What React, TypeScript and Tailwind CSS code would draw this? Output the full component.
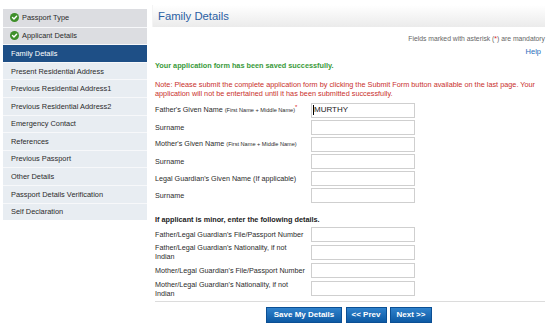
import React from "react";

const sideItems = [
  { label: "Passport Type", done: true },
  { label: "Applicant Details", done: true },
  { label: "Family Details", active: true },
  { label: "Present Residential Address" },
  { label: "Previous Residential Address1" },
  { label: "Previous Residential Address2" },
  { label: "Emergency Contact" },
  { label: "References" },
  { label: "Previous Passport" },
  { label: "Other Details" },
  { label: "Passport Details Verification" },
  { label: "Self Declaration" },
];

const CheckIcon = () => (
  <svg width="9" height="9" viewBox="0 0 10 10" className="shrink-0">
    <circle cx="5" cy="5" r="5" fill="#3f8f2a" />
    <path d="M2.8 5.1 L4.4 6.6 L7.3 3.5" stroke="#fff" strokeWidth="1.6" fill="none" strokeLinecap="round" strokeLinejoin="round" />
  </svg>
);

const Field = ({ value, caret }: { value?: string; caret?: boolean }) => (
  <div className="w-[104px] h-[15px] border border-[#cfcfcf] bg-white flex items-center pl-[1px] shrink-0">
    {caret && <span className="w-px h-[10px] bg-black" />}
    {value && <span className="text-[8px] text-[#222] leading-none">{value}</span>}
  </div>
);

const Row = ({ children, tall }: { children: React.ReactNode; tall?: boolean }) => (
  <div className={`flex items-center ${tall ? "h-[18px]" : "h-[15px]"}`}>{children}</div>
);

const Label = ({ children }: { children: React.ReactNode }) => (
  <div className="w-[156px] shrink-0 text-[7.2px] leading-[9px] text-[#2b2b2b]">{children}</div>
);

export default function App() {
  return (
    <div className="w-[560px] h-[332px] bg-white flex items-start font-['Liberation_Sans',Arial,sans-serif] overflow-hidden">
      {/* sidebar */}
      <div className="w-[144px] ml-[3px] mt-[9px] flex flex-col shrink-0">
        {sideItems.map((it, i) => (
          <div
            key={it.label}
            className={`h-[17.6px] flex items-center gap-[3px] pl-[7px] text-[7.4px] ${i > 0 ? "border-t border-[#f7f8fa]" : ""} ${
              it.active
                ? "bg-[#1e4f86] text-white"
                : it.done
                ? "bg-[#dcdde1] text-[#2b2b2b]"
                : "bg-[#e8edf2] text-[#2b2b2b]"
            }`}
          >
            {it.done && <CheckIcon />}
            <span className={it.done ? "" : "pl-[1px]"}>{it.label}</span>
          </div>
        ))}
      </div>

      {/* main */}
      <div className="ml-[5px] mt-[5px] w-[393px] flex flex-col">
        <div className="h-[22px] flex items-center pl-[5px] bg-gradient-to-b from-white to-[#ebebeb] border-l border-[#f4f4f4]">
          <span className="text-[11.3px] text-[#2b60a3]">Family Details</span>
        </div>

        <div className="mt-[7px] h-[10px] flex items-center justify-end text-[6.8px] text-[#666]">
          Fields marked with asterisk (<span className="text-[#d22]">*</span>) are mandatory
        </div>
        <div className="mt-[3px] h-[10px] flex items-center justify-end pr-[4px] text-[7.5px] text-[#2a6ebb]">Help</div>

        <div className="pl-[3px]">
          <div className="mt-[4px] h-[10px] flex items-center text-[7.3px] font-bold text-[#3a9a3a]">
            Your application form has been saved successfully.
          </div>
          <div className="mt-[9px] text-[7.3px] leading-[9px] text-[#c9302c] whitespace-nowrap">
            Note: Please submit the complete application form by clicking the Submit Form button available on the last page. Your
            <br />
            application will not be entertained until it has been submitted successfully.
          </div>

          <div className="mt-[4.5px] flex flex-col gap-[2px]">
            <Row>
              <Label>
                Father's Given Name <span className="text-[5.6px]">(First Name + Middle Name)</span>
                <sup className="text-[#d22] text-[6px]">*</sup>
              </Label>
              <Field value="MURTHY" caret />
            </Row>
            <Row>
              <Label>Surname</Label>
              <Field />
            </Row>
            <Row>
              <Label>
                Mother's Given Name <span className="text-[5.6px]">(First Name + Middle Name)</span>
              </Label>
              <Field />
            </Row>
            <Row>
              <Label>Surname</Label>
              <Field />
            </Row>
            <Row>
              <Label>Legal Guardian's Given Name (If applicable)</Label>
              <Field />
            </Row>
            <Row>
              <Label>Surname</Label>
              <Field />
            </Row>
          </div>

          <div className="mt-[13px] h-[10px] flex items-center text-[7.3px] font-bold text-[#222]">
            If applicant is minor, enter the following details.
          </div>

          <div className="mt-[1px] flex flex-col gap-[1.7px]">
            <Row>
              <Label>Father/Legal Guardian's File/Passport Number</Label>
              <Field />
            </Row>
            <Row tall>
              <Label>
                Father/Legal Guardian's Nationality, if not
                <br />
                Indian
              </Label>
              <Field />
            </Row>
            <Row>
              <Label>Mother/Legal Guardian's File/Passport Number</Label>
              <Field />
            </Row>
            <Row tall>
              <Label>
                Mother/Legal Guardian's Nationality, if not
                <br />
                Indian
              </Label>
              <Field />
            </Row>
          </div>

          <div className="mt-[3px] border-t border-[#dcdcdc]" />

          <div className="mt-[5px] flex justify-center gap-[3.5px] pr-[2px]">
            {[
              { t: "Save My Details", w: "w-[76px]" },
              { t: "<< Prev", w: "w-[41px]" },
              { t: "Next >>", w: "w-[42px]" },
            ].map((b) => (
              <button
                key={b.t}
                type="button"
                className={`${b.w} h-[16px] flex items-center justify-center border border-[#0b4f94] bg-gradient-to-b from-[#2f82cc] to-[#0c5aa4] text-white text-[8px] font-bold leading-none`}
              >
                {b.t}
              </button>
            ))}
          </div>
        </div>
      </div>
    </div>
  );
}
